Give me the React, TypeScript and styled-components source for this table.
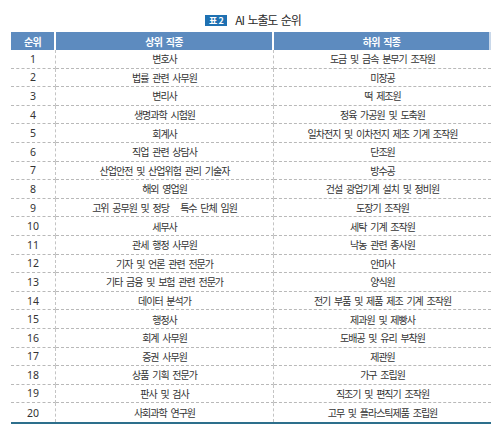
import React from 'react';
import styled, { createGlobalStyle } from 'styled-components';

const GlobalStyle = createGlobalStyle`
  html, body {
    margin: 0;
    padding: 0;
    background: #ffffff;
  }
  body {
    font-family: "Noto Sans CJK KR", "Noto Sans", sans-serif;
    color: #333333;
  }
`;

const Page = styled.div`
  width: 500px;
  height: 434px;
  box-sizing: border-box;
  padding: 13px 9px 0 11px;
`;

const Caption = styled.div`
  display: flex;
  align-items: center;
  justify-content: center;
  gap: 8px;
  height: 14px;
  margin-left: 4px;
  margin-bottom: 5px;
`;

const Badge = styled.span`
  display: inline-flex;
  align-items: center;
  justify-content: center;
  width: 22px;
  height: 11px;
  background: #1f71b2;
  color: #ffffff;
  font-size: 9px;
  font-weight: 700;
  letter-spacing: -0.3px;
  line-height: 1;
`;

const CaptionText = styled.span`
  font-size: 12px;
  letter-spacing: -1.1px;
  word-spacing: 2px;
  color: #2a2a2a;
  line-height: 1;
`;

const Table = styled.div`
  display: grid;
  grid-template-columns: 45px 218px 217px;
  border-bottom: 2px solid #2d6f8c;
`;

const HeadCell = styled.div<{ last?: boolean }>`
  height: 18px;
  display: flex;
  align-items: center;
  justify-content: center;
  background: #5d8bbf;
  color: #ffffff;
  font-size: 10px;
  font-weight: 700;
  letter-spacing: -0.7px;
  word-spacing: 2px;
  border-right: ${p => (p.last ? '2px solid #c9d8ea' : '2px solid #ffffff')};
`;

const Cell = styled.div<{ divider?: boolean; lastRow?: boolean }>`
  height: 18.6px;
  box-sizing: border-box;
  display: flex;
  align-items: center;
  justify-content: center;
  font-size: 10px;
  letter-spacing: -1px;
  word-spacing: 2.5px;
  color: #333333;
  white-space: pre;
  border-bottom: ${p => (p.lastRow ? 'none' : '1px dashed #b9b9b9')};
  border-right: ${p => (p.divider ? '1px dashed #c4c4c4' : 'none')};
`;

const Rank = styled(Cell)`
  font-size: 10.5px;
  letter-spacing: 0;
  font-family: "Noto Sans", sans-serif;
`;

const rows: [string, string][] = [
  ['변호사', '도금 및 금속 분무기 조작원'],
  ['법률 관련 사무원', '미장공'],
  ['변리사', '떡 제조원'],
  ['생명과학 시험원', '정육 가공원 및 도축원'],
  ['회계사', '일차전지 및 이차전지 제조 기계 조작원'],
  ['직업 관련 상담사', '단조원'],
  ['산업안전 및 산업위험 관리 기술자', '방수공'],
  ['해외 영업원', '건설 광업기계 설치 및 정비원'],
  ['고위 공무원 및 정당   특수 단체 임원', '도장기 조작원'],
  ['세무사', '세탁 기계 조작원'],
  ['관세 행정 사무원', '낙농 관련 종사원'],
  ['기자 및 언론 관련 전문가', '안마사'],
  ['기타 금융 및 보험 관련 전문가', '양식원'],
  ['데이터 분석가', '전기 부품 및 제품 제조 기계 조작원'],
  ['행정사', '제과원 및 제빵사'],
  ['회계 사무원', '도배공 및 유리 부착원'],
  ['증권 사무원', '제관원'],
  ['상품 기획 전문가', '가구 조립원'],
  ['판사 및 검사', '직조기 및 편직기 조작원'],
  ['사회과학 연구원', '고무 및 플라스틱제품 조립원'],
];

const App: React.FC = () => {
  return (
    <>
      <GlobalStyle />
      <Page>
        <Caption>
          <Badge>표 2</Badge>
          <CaptionText>AI 노출도 순위</CaptionText>
        </Caption>
        <Table>
          <HeadCell>순위</HeadCell>
          <HeadCell>상위 직종</HeadCell>
          <HeadCell last>하위 직종</HeadCell>
          {rows.map(([high, low], i) => {
            const lastRow = i === rows.length - 1;
            return (
              <React.Fragment key={i}>
                <Rank divider lastRow={lastRow}>{i + 1}</Rank>
                <Cell divider lastRow={lastRow}>{high}</Cell>
                <Cell lastRow={lastRow}>{low}</Cell>
              </React.Fragment>
            );
          })}
        </Table>
      </Page>
    </>
  );
};

export default App;
